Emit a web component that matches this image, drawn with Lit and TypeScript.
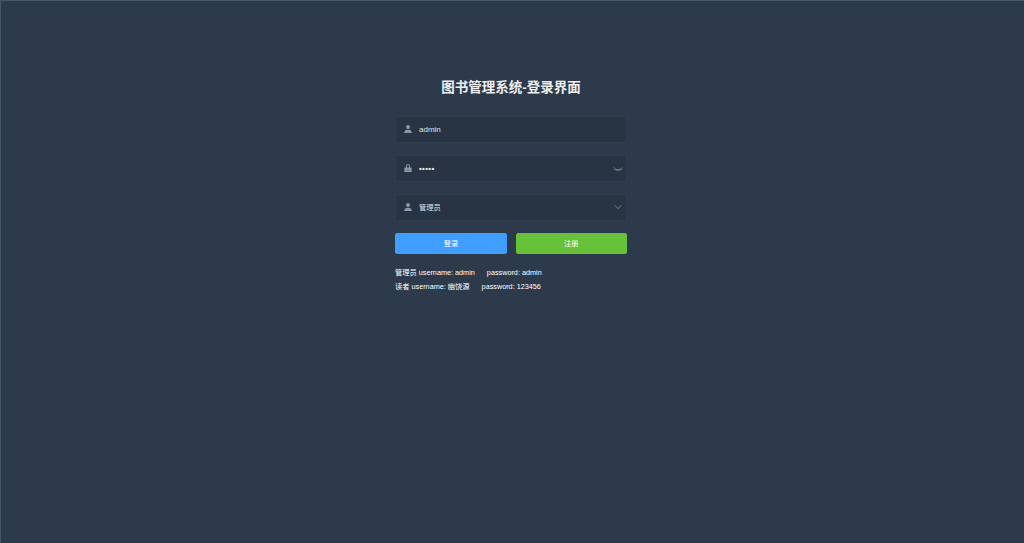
import { LitElement, html, css, svg } from "lit";
import { customElement } from "lit/decorators.js";

const userIcon = svg`<path d="M8 1.500c-1.900 0-3 1.400-3 3.200S6.100 8.200 8 8.200s3-1.700 3-3.500S9.900 1.500 8 1.500zM1.800 14.500c0-3 2-4.900 4.200-5.400.6.400 1.200.6 2 .6s1.400-.2 2-.6c2.200.5 4.200 2.400 4.200 5.400H1.800z" fill="currentColor"/>`;
const lockIcon = svg`<path d="M4.600 7V5C4.600 3 6.100 1.500 8 1.500S11.400 3 11.400 5v2h1.500c.5 0 .9.4.9.9v5.700c0 .5-.4.9-.9.900H3.100c-.5 0-.9-.4-.9-.9V7.900c0-.5.4-.9.9-.9h1.500zm1.700 0h3.400V5c0-1-.7-1.800-1.700-1.800S6.300 4 6.300 5v2zM7.300 10v2h1.400v-2H7.300z" fill="currentColor" fill-rule="evenodd"/>`;

@customElement("app-root")
export class AppRoot extends LitElement {
  static styles = css`
    :host {
      display: block;
      box-sizing: border-box;
      height: 543px;
      overflow: hidden;
      background: #2d3a4b;
      border-top: 1px solid #47566a;
      border-left: 1px solid #47566a;
      font-family: "Liberation Sans", "Noto Sans CJK SC", sans-serif;
    }
    .form {
      width: 232px;
      margin: 0 0 0 394px;
      padding-top: 77px;
      display: flex;
      flex-direction: column;
    }
    h1 {
      margin: 0 0 19px;
      height: 19px;
      line-height: 19px;
      font-size: 13.5px;
      font-weight: 700;
      color: #eeeeee;
      text-align: center;
    }
    .field {
      box-sizing: border-box;
      width: 231.500px;
      height: 26.500px;
      margin-bottom: 12.500px;
      padding: 0 3px 0 7px;
      display: flex;
      align-items: center;
      background: #283443;
      border: 1px solid rgba(255, 255, 255, 0.05);
      border-radius: 2.500px;
      color: #dfe3e8;
      font-size: 8px;
    }
    .field.last { margin-bottom: 12px; }
    .icon {
      width: 10px;
      height: 10px;
      color: #889aa4;
      flex: none;
    }
    .value {
      flex: 1;
      margin-left: 6px;
    }
    .cjk { font-size: 7.300px; }
    .dots {
      font-size: 8px;
      letter-spacing: 0.300px;
      font-weight: 700;
      color: #eeeeee;
    }
    .trail {
      width: 10px;
      height: 10px;
      flex: none;
      color: #889aa4;
    }
    .buttons {
      display: flex;
      justify-content: space-between;
      margin-bottom: 12px;
    }
    button {
      width: 112px;
      height: 21px;
      padding: 0;
      border: 0.500px solid;
      border-radius: 2px;
      color: #ffffff;
      font: inherit;
      font-size: 7.300px;
    }
    .login { background: #409eff; border-color: #409eff; }
    .register { width: 111.500px; background: #67c23a; border-color: #67c23a; }
    .tips {
      color: #ffffff;
      font-size: 7.250px;
      line-height: 14px;
      white-space: pre;
    }
  `;

  render() {
    return html`
      <div class="form">
        <h1>图书管理系统-登录界面</h1>
        <div class="field">
          <svg class="icon" viewBox="0 0 16 16">${userIcon}</svg>
          <span class="value">admin</span>
        </div>
        <div class="field">
          <svg class="icon" viewBox="0 0 16 16">${lockIcon}</svg>
          <span class="value dots">•••••</span>
          <svg class="trail" viewBox="0 0 16 16" fill="none" stroke="currentColor" stroke-width="1.200">
            <path d="M1 7c2 2.600 4.400 3.800 7 3.800S13 9.600 15 7M3.500 9.500 2 11M12.500 9.500 14 11M8 11v2M5.500 10.500 5 12.500M10.500 10.500l.5 2"/>
          </svg>
        </div>
        <div class="field last">
          <svg class="icon" viewBox="0 0 16 16">${userIcon}</svg>
          <span class="value cjk">管理员</span>
          <svg class="trail" viewBox="0 0 16 16" fill="none" stroke="currentColor" stroke-width="1.300">
            <path d="M3 5.500 8 10.500 13 5.500"/>
          </svg>
        </div>
        <div class="buttons">
          <button class="login">登录</button>
          <button class="register">注册</button>
        </div>
        <div class="tips">管理员 username: admin      password: admin
读者 username: 幽饶源      password: 123456</div>
      </div>
    `;
  }
}
